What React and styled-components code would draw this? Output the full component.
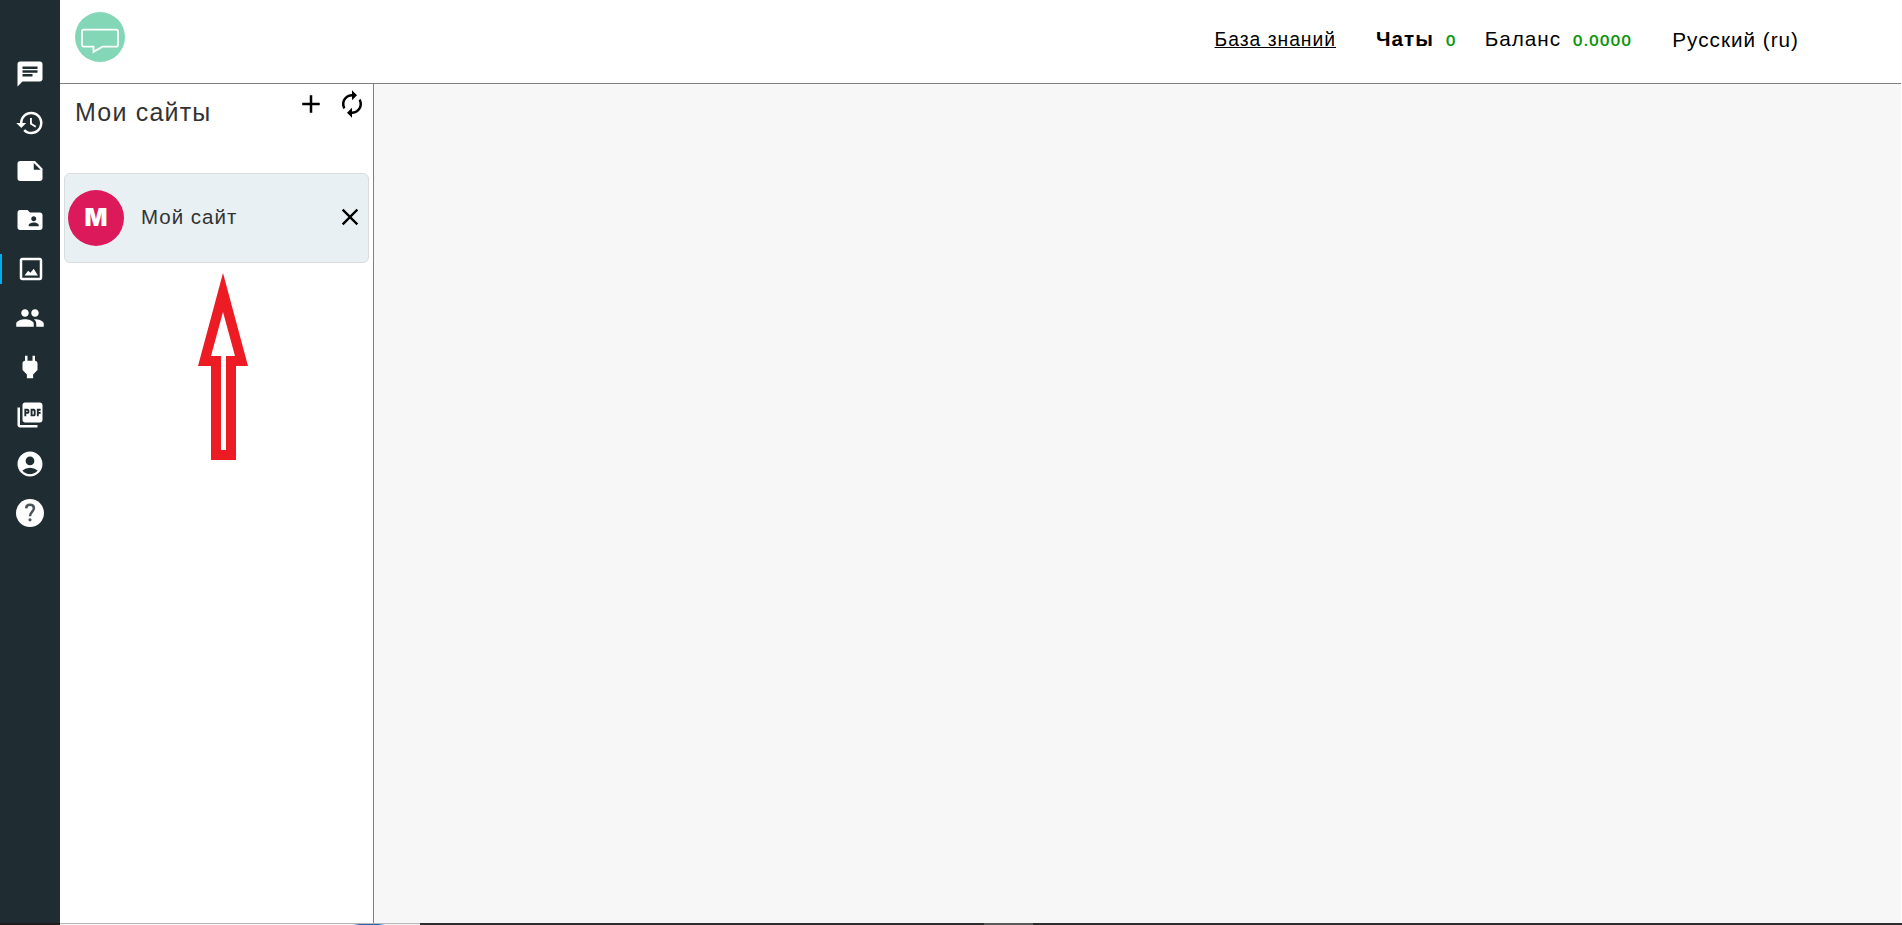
import React from 'react';
import styled, { createGlobalStyle } from 'styled-components';
import {
  MdAccountCircle,
  MdAdd,
  MdAutorenew,
  MdChat,
  MdClose,
  MdFolderShared,
  MdGroup,
  MdHistory,
  MdNote,
  MdPictureAsPdf,
  MdPower,
} from 'react-icons/md';

const GlobalStyle = createGlobalStyle`
  * {
    box-sizing: border-box;
  }
  body {
    margin: 0;
    overflow: hidden;
    background: #fff;
    font-family: 'Liberation Sans', Arial, sans-serif;
  }
`;
const Page = styled.div`
  display: flex;
  flex-direction: column;
  height: 100vh;
`;
const Shell = styled.div`
  flex: 1;
  display: flex;
  min-height: 0;
`;
const Sidebar = styled.nav`
  width: 60px;
  padding-top: 49.5px;
  background: #1f2c31;
  color: #fff;
`;
const NavItem = styled.a`
  display: flex;
  align-items: center;
  justify-content: center;
  height: 48.8px;
  position: relative;
  padding-left: ${props => (props.$active ? '2px' : '0')};
  &::before {
    content: '';
    display: ${props => (props.$active ? 'block' : 'none')};
    position: absolute;
    left: 0;
    top: 9.5px;
    width: 2px;
    height: 30px;
    background: #00aeef;
  }
`;
const Content = styled.div`
  flex: 1;
  display: flex;
  flex-direction: column;
  border-right: 1px solid #fdfdfd;
`;
const Header = styled.header`
  display: flex;
  align-items: flex-start;
  height: 84px;
  padding: 12px 102px 0 15px;
  border-bottom: 1px solid #808080;
  background: #fff;
`;
const HeaderLinks = styled.div`
  display: flex;
  margin-left: auto;
  padding-top: 15px;
  line-height: 23px;
  font-size: 20.7px;
  letter-spacing: 1px;
  color: #000;
  white-space: nowrap;
`;
const KnowledgeLink = styled.a`
  margin-right: 40px;
  font-size: 19.3px;
  line-height: 26px;
  text-decoration: underline;
`;
const Stat = styled.span`
  margin-right: ${props => props.$gap};
  font-weight: ${props => (props.$bold ? 'bold' : 'normal')};
`;
const Value = styled.span`
  margin-left: 12px;
  font-family: Lato, sans-serif;
  font-size: 16px;
  font-weight: bold;
  letter-spacing: 1.5px;
  color: #0a960a;
`;
const Language = styled.span`
  line-height: 25px;
`;
const Body = styled.div`
  flex: 1;
  display: flex;
`;
const SitesPanel = styled.section`
  width: 314px;
  border-right: 1px solid #808080;
  background: #fff;
`;
const PanelHeader = styled.div`
  display: flex;
  align-items: flex-start;
  height: 89px;
  padding: 5px 6px 0 15px;
`;
const PanelTitle = styled.h1`
  flex: 1;
  margin: 9px 0 0;
  font-size: 25px;
  font-weight: normal;
  line-height: 28px;
  letter-spacing: 1.2px;
  color: #333;
`;
const IconButton = styled.button`
  display: flex;
  padding: 0;
  margin-left: 11px;
  border: 0;
  background: none;
  color: #000;
`;
const SiteCard = styled.div`
  display: flex;
  align-items: center;
  height: 90px;
  margin: 0 4px;
  padding: 0 4px 0 3px;
  border: 1px solid #d9dcdd;
  border-radius: 6px;
  background: #e8f0f3;
  ${IconButton} {
    padding-bottom: 3px;
  }
`;
const Avatar = styled.div`
  width: 56px;
  height: 56px;
  border-radius: 50%;
  background: #dc1a5b;
  color: #fff;
  font: 900 24px/56px Inter, sans-serif;
  text-align: center;
`;
const SiteName = styled.span`
  flex: 1;
  margin-left: 17px;
  padding-bottom: 2px;
  font-size: 20.5px;
  letter-spacing: 1px;
  color: #333;
`;
const Workspace = styled.main`
  flex: 1;
  background: #f7f7f7;
`;
const Arrow = styled.svg`
  display: block;
  margin: 10px 0 0 137px;
`;
const BottomBar = styled.div`
  display: flex;
  height: 2px;
  background: #2d2d2f;
`;
const BarStart = styled.div`
  width: 60px;
  background: #211b1e;
`;
const StatusStrip = styled.div`
  display: flex;
  width: 360px;
  border-top: 1px solid #b8b8b8;
  background: #f5f5f5;
`;
const StatusDot = styled.div`
  width: 32px;
  height: 1px;
  margin-left: 293px;
  background: linear-gradient(to right, #f5f5f5, #2f66aa 20%, #2f66aa 80%, #f5f5f5);
`;
const BarTask = styled.div`
  width: 49px;
  margin-left: 564px;
  background: #595959;
`;

const Logo = () => (
  <svg width="50" height="50" viewBox="0 0 50 50">
    <circle cx="25" cy="25" r="25" fill="#83d7b6" />
    <path
      d="M9 17.7h32q2 0 2 2v13q0 2-2 2H27.5l-9 5.2v-5.2H9q-2 0-2-2v-13q0-2 2-2z"
      fill="none"
      stroke="#fff"
      strokeWidth="1.8"
    />
  </svg>
);

const SitesIcon = ({ size }) => (
  <svg width={size} height={size} viewBox="0 0 24 24" fill="currentColor">
    <path d="M19 3H5c-1.1 0-2 .9-2 2v14c0 1.1.9 2 2 2h14c1.1 0 2-.9 2-2V5c0-1.1-.9-2-2-2zm0 16H5V5h14v14z" />
    <path d="M6.8 17.2l2.9-3.8 1.8 1.6 2.7-3.2 3.3 5.4z" />
  </svg>
);

const HelpIcon = ({ size }) => (
  <svg width={size} height={size} viewBox="0 0 28 28">
    <circle cx="14" cy="14" r="14" fill="currentColor" />
    <path
      d="M10.1 9.3C10.3 7 12 5.8 14 5.8c2.3 0 3.9 1.3 3.9 3.4 0 3.3-3.9 3.6-3.9 8"
      fill="none"
      stroke="#4c565a"
      strokeWidth="2.5"
    />
    <circle cx="14" cy="20.8" r="1.6" fill="#4c565a" />
  </svg>
);

const items = [
  { name: 'chat', Icon: MdChat, size: 30 },
  { name: 'history', Icon: MdHistory, size: 30 },
  { name: 'notes', Icon: MdNote, size: 30 },
  { name: 'contacts', Icon: MdFolderShared, size: 30 },
  { name: 'sites', Icon: SitesIcon, size: 30, active: true },
  { name: 'team', Icon: MdGroup, size: 30 },
  { name: 'plugins', Icon: MdPower, size: 30 },
  { name: 'pdf', Icon: MdPictureAsPdf, size: 30 },
  { name: 'account', Icon: MdAccountCircle, size: 30 },
  { name: 'help', Icon: HelpIcon, size: 28 },
];

const App = () => {
  return (
    <Page>
      <GlobalStyle />
      <Shell>
        <Sidebar>
          {items.map(({ name, Icon, size, active }) => (
            <NavItem key={name} $active={active}>
              <Icon size={size} />
            </NavItem>
          ))}
        </Sidebar>
        <Content>
          <Header>
            <Logo />
            <HeaderLinks>
              <KnowledgeLink>База знаний</KnowledgeLink>
              <Stat $bold $gap="28px">
                Чаты<Value>0</Value>
              </Stat>
              <Stat $gap="40px">
                Баланс<Value>0.0000</Value>
              </Stat>
              <Language>Русский (ru)</Language>
            </HeaderLinks>
          </Header>
          <Body>
            <SitesPanel>
              <PanelHeader>
                <PanelTitle>Мои сайты</PanelTitle>
                <IconButton>
                  <MdAdd size={30} />
                </IconButton>
                <IconButton>
                  <MdAutorenew size={30} />
                </IconButton>
              </PanelHeader>
              <SiteCard>
                <Avatar>M</Avatar>
                <SiteName>Мой сайт</SiteName>
                <IconButton>
                  <MdClose size={28} />
                </IconButton>
              </SiteCard>
              <Arrow width="52" height="188" viewBox="0 0 52 188">
                <path
                  fill="#ed1c24"
                  fillRule="evenodd"
                  d="M26 0L51 93H39v94H14V93H1zM26 39L14 83h10v94h5V83h9z"
                />
              </Arrow>
            </SitesPanel>
            <Workspace />
          </Body>
        </Content>
      </Shell>
      <BottomBar>
        <BarStart />
        <StatusStrip>
          <StatusDot />
        </StatusStrip>
        <BarTask />
      </BottomBar>
    </Page>
  );
};

export default App;
